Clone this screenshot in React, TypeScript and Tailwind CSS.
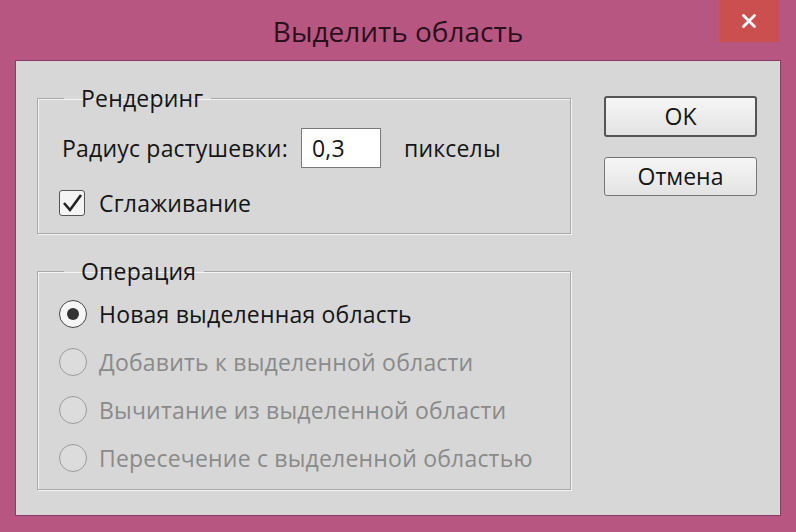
import { X } from "lucide-react";

const options = [
  { label: "Новая выделенная область", active: true },
  { label: "Добавить к выделенной области", active: false },
  { label: "Вычитание из выделенной области", active: false },
  { label: "Пересечение с выделенной областью", active: false },
];

function Group({ title, className, children }: { title: string; className: string; children: React.ReactNode }) {
  return (
    <fieldset className={`border border-[#a9a9a9] shadow-[inset_1px_1px_0_#f4f4f4,1px_1px_0_#f4f4f4] ${className}`}>
      <legend className="ml-[26px] pl-[17px] pr-[8px] text-[23px] leading-[26px] tracking-[0.2px] text-[#151515]">{title}</legend>
      {children}
    </fieldset>
  );
}

export default function App() {
  return (
    <div className="h-[532px] w-[796px] bg-[#b85682] font-['Open_Sans',sans-serif]">
      <div className="relative flex h-[60px] items-center justify-center">
        <span className="mt-[2px] text-[28px] text-[#2a0f1d]">Выделить область</span>
        <div className="absolute right-[17px] top-0 flex h-[42px] w-[60px] items-center justify-center bg-[#cc4f4f]">
          <X size={22} strokeWidth={3} className="text-white" />
        </div>
      </div>

      <div className="mx-[15px] flex h-[456px] border border-[#8b3d61] bg-[#d7d7d7] pl-[21px] pt-[24px]">
        <div className="flex w-[534px] flex-col gap-[24px]">
          <Group title="Рендеринг" className="h-[149px]">
            <div className="pl-[24px] text-[23px] tracking-[0.2px] text-[#151515]">
              <div className="mt-[17px] flex items-center">
                <span>Радиус растушевки:</span>
                <div className="ml-[13px] flex h-[40px] w-[80px] items-center border border-[#7a7a7a] bg-white pl-[10px]">0,3</div>
                <span className="ml-[23px]">пикселы</span>
              </div>
              <label className="-ml-[3px] mt-[18px] flex items-center gap-[14px]">
                <span className="flex h-[26px] w-[26px] items-center justify-center rounded-[3px] border border-[#555] bg-[#f4f4f4]">
                  <svg width="22" height="20" viewBox="0 0 22 20">
                    <path d="M3 10 L9 17 L20 2" fill="none" stroke="#222" strokeWidth="2.6" />
                  </svg>
                </span>
                Сглаживание
              </label>
            </div>
          </Group>

          <Group title="Операция" className="h-[232px]">
            <div className="mt-[14px] flex flex-col gap-[16px] pl-[21px]">
              {options.map((o) => (
                <div
                  key={o.label}
                  className={`flex h-[32px] items-center gap-[12px] text-[23px] tracking-[0.2px] ${o.active ? "text-[#151515]" : "text-[#8a8a8a]"}`}
                >
                  <span
                    className={`flex h-[28px] w-[28px] items-center justify-center rounded-full border ${
                      o.active ? "border-[#444] bg-[#f6f6f6]" : "border-[#9c9c9c] bg-[#dcdcdc]"
                    }`}
                  >
                    {o.active && <span className="h-[12px] w-[12px] rounded-full bg-[#333]" />}
                  </span>
                  {o.label}
                </div>
              ))}
            </div>
          </Group>
        </div>

        <div className="ml-[33px] flex w-[153px] flex-col gap-[20px] pt-[11px]">
          <button className="h-[41px] rounded-[3px] border-2 border-[#555] bg-gradient-to-b from-[#f6f6f6] to-[#e3e3e3] text-[23px] text-[#151515]">
            OK
          </button>
          <button className="h-[39px] rounded-[3px] border border-[#777] bg-gradient-to-b from-[#f6f6f6] to-[#e3e3e3] text-[23px] text-[#151515]">
            Отмена
          </button>
        </div>
      </div>
    </div>
  );
}
